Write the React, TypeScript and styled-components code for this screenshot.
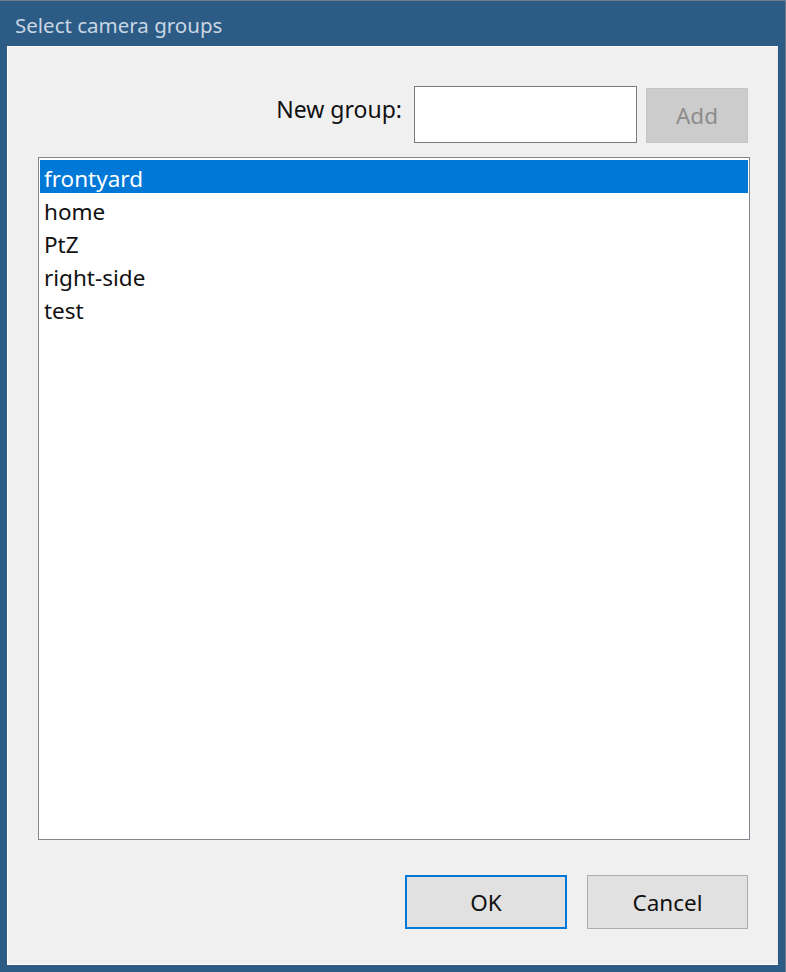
import React, { useState } from "react";
import styled, { createGlobalStyle } from "styled-components";

const Global = createGlobalStyle`
  html, body { margin: 0; padding: 0; background: #2c5c86; }
  * { box-sizing: border-box; }
`;

const FONT = `"Noto Sans", "Open Sans", "Liberation Sans", sans-serif`;

const Window = styled.div`
  width: 786px;
  height: 972px;
  background: #2c5c86;
  border-top: 1px solid #6d7a87;
  border-right: 1px solid #6d7a87;
  display: flex;
  flex-direction: column;
  font-family: ${FONT};
`;

const TitleBar = styled.div`
  height: 45px;
  flex: none;
  display: flex;
  align-items: center;
  padding-left: 15px;
  padding-top: 3px;
  color: #c9d6e3;
  font-size: 20.5px;
`;

const Client = styled.div`
  flex: 1;
  margin: 0 7px 7px 7px;
  background: #f0f0f0;
  border-top: 1px solid #ffffff;
  border-left: 1px solid #ffffff;
  border-right: 1px solid #e6e6e6;
  border-bottom: 1px solid #ffffff;
  display: flex;
  flex-direction: column;
  padding: 39px 27px 0 30px;
`;

const TopRow = styled.div`
  display: flex;
  justify-content: flex-end;
  align-items: center;
  padding-right: 2px;
  height: 57px;
`;

const Label = styled.span`
  font-size: 23px;
  color: #111;
  margin-right: 12px;
  margin-top: -12px;
`;

const Input = styled.input`
  width: 223px;
  height: 57px;
  border: 1px solid #7a7a7a;
  background: #fff;
  font-family: ${FONT};
  font-size: 22px;
  padding: 0 6px;
  outline: none;
`;

const Button = styled.button<{ $primary?: boolean; $disabled?: boolean }>`
  font-family: ${FONT};
  font-size: 22.5px;
  background: ${(p) => (p.$disabled ? "#cccccc" : "#e1e1e1")};
  color: ${(p) => (p.$disabled ? "#8c8c8c" : "#111")};
  border: ${(p) => (p.$primary ? "2px solid #0078d7" : p.$disabled ? "1px solid #c4c4c4" : "1px solid #adadad")};
  border-radius: 0;
  padding: 0;
  cursor: default;
  display: flex;
  align-items: center;
  justify-content: center;
`;

const AddButton = styled(Button)`
  width: 102px;
  height: 55px;
  margin-left: 9px;
  margin-top: 1px;
`;

const List = styled.div`
  margin-top: 14px;
  height: 683px;
  background: #fff;
  border: 1px solid #828790;
  padding: 2px 1px;
`;

const Item = styled.div<{ $selected?: boolean }>`
  height: 33px;
  line-height: 33px;
  padding-left: 4px;
  padding-top: 2px;
  font-size: 22.5px;
  color: ${(p) => (p.$selected ? "#fff" : "#111")};
  background: ${(p) => (p.$selected ? "#0078d7" : "transparent")};
  white-space: nowrap;
`;

const BottomRow = styled.div`
  display: flex;
  justify-content: flex-end;
  gap: 20px;
  padding-right: 2px;
  margin-top: 35px;
`;

const DialogButton = styled(Button)<{ $w: number }>`
  width: ${(p) => p.$w}px;
  height: 54px;
`;

export default function App() {
  const [selected, setSelected] = useState(0);
  const groups = ["frontyard", "home", "PtZ", "right-side", "test"];
  return (
    <>
      <Global />
      <Window>
        <TitleBar>Select camera groups</TitleBar>
        <Client>
          <TopRow>
            <Label>New group:</Label>
            <Input />
            <AddButton $disabled>Add</AddButton>
          </TopRow>
          <List>
            {groups.map((g, i) => (
              <Item key={g} $selected={i === selected} onClick={() => setSelected(i)}>
                {g}
              </Item>
            ))}
          </List>
          <BottomRow>
            <DialogButton $primary $w={162}>OK</DialogButton>
            <DialogButton $w={161}>Cancel</DialogButton>
          </BottomRow>
        </Client>
      </Window>
    </>
  );
}
